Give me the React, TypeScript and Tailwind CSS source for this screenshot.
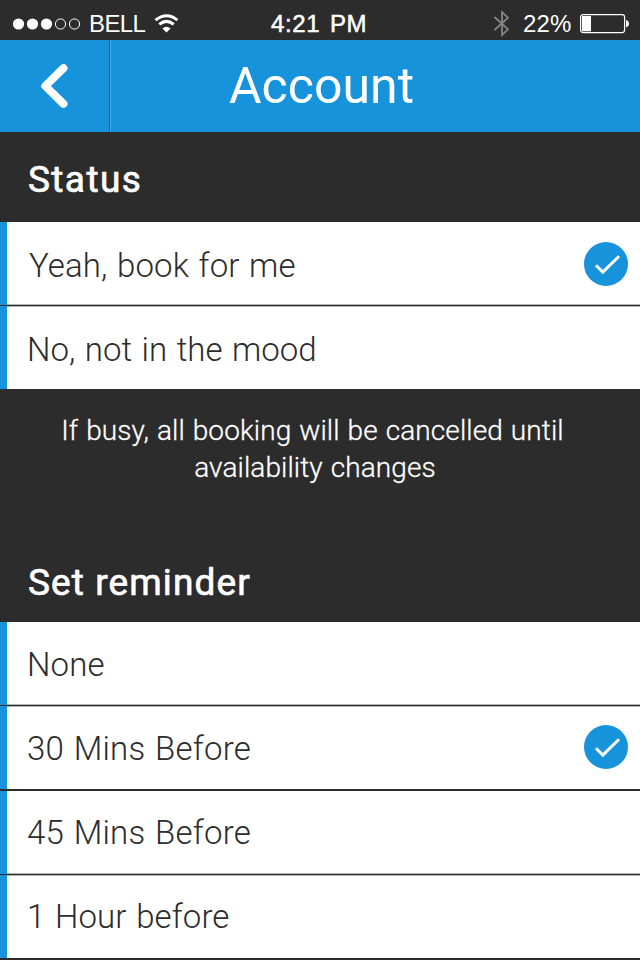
import React from "react";

function Check({ offset }: { offset: string }) {
  return (
    <svg className={`mr-3 h-11 w-11 shrink-0 ${offset}`} viewBox="0 0 44 44" fill="none">
      <circle cx="22" cy="22" r="22" fill="#1793dc" />
      <path d="M12 23.3 L18.8 30.1 L35 14.3" stroke="#fff" strokeWidth="3" />
    </svg>
  );
}

type Option = { label: string; check?: string; text: string };

function Row({ label, check, text }: Option) {
  return (
    <div className="flex h-[82px] items-center border-l-[7px] border-[#1793dc] bg-white">
      <span className={`flex-1 whitespace-nowrap text-[33px] leading-[38px] font-light [word-spacing:1.5px] ${text}`}>{label}</span>
      {check && <Check offset={check} />}
    </div>
  );
}

// Thin rule with soft grey edges that stop at the blue bar.
function Hairline() {
  return (
    <div className="flex h-[3px] bg-[#1793dc]">
      <div className="mt-px h-px w-[7px] bg-[#2c2c2c]" />
      <div className="h-[3px] flex-1 border-y border-[#b3b5b2] bg-[#2c2c2c]" />
    </div>
  );
}

function StatusBar() {
  return (
    <div className="flex h-10 items-center pt-[7px] font-['Liberation_Sans',Arial,sans-serif] text-[24px] leading-8">
      <svg className="ml-[12px] h-3 w-[70px]" viewBox="0 0 70 12">
        <g fill="#fff">
          <circle cx="6.5" cy="6" r="5.6" />
          <circle cx="20.5" cy="6" r="5.6" />
          <circle cx="34.5" cy="6" r="5.6" />
        </g>
        <g fill="none" stroke="#fff" strokeWidth="1">
          <circle cx="48.5" cy="6" r="5.1" />
          <circle cx="62.5" cy="6" r="5.1" />
        </g>
      </svg>
      <span className="ml-[7px] w-[65px] whitespace-nowrap tracking-[-0.6px]">BELL</span>
      <svg className="h-5 w-6" viewBox="0 0 24 20" fill="none" stroke="#fff" strokeWidth="3">
        <path d="M1.5 6.2 Q12.5 -2.7 23.5 6.2" />
        <path d="M5.3 10.4 Q12.5 4.4 19.7 10.4" />
        <path d="M12.5 18.5 L8.4 14.5 Q12.5 11 16.6 14.5 Z" fill="#fff" stroke="none" />
      </svg>
      <span className="ml-[93px] w-[222px] whitespace-nowrap tracking-[0.6px] [word-spacing:2.5px] [-webkit-text-stroke:0.5px_white]">4:21 PM</span>
      <svg className="h-[27px] w-4" viewBox="0 0 16 27" fill="none" stroke="#858585" strokeWidth="1.8">
        <path d="M1.5 7 L15 19.3 L9 25 V2 L15 7.7 L1.5 20" />
      </svg>
      <span className="ml-[14px] w-[57px] whitespace-nowrap tracking-[0.2px]">22%</span>
      <svg className="h-5 w-[50px]" viewBox="0 0 50 20">
        <rect x="0.6" y="0.6" width="44" height="18" rx="2.5" fill="none" stroke="#fff" strokeWidth="1.2" />
        <rect x="2" y="2" width="9" height="15.3" fill="#fff" />
        <path d="M46 6 Q49 7 49 9.7 Q49 12.3 46 13.3 Z" fill="#fff" />
      </svg>
    </div>
  );
}

export default function App() {
  return (
    <div className="h-[960px] w-[640px] overflow-hidden bg-[#2c2c2c] font-[Roboto,sans-serif] text-white">
      <StatusBar />
      <header className="flex h-[92px] bg-[#1793dc]">
        <div className="flex w-[109px] items-center justify-center">
          <svg className="h-12 w-8" viewBox="0 0 32 48" fill="none" stroke="#fff" strokeWidth="8" strokeLinejoin="round" strokeLinecap="round">
            <path d="M24.5 6.2 L6.3 24 L24.5 41.8" />
          </svg>
        </div>
        <div className="w-px bg-[#1569a8]" />
        <div className="w-px bg-[#48a8e6]" />
        <h1 className="ml-[118px] mt-[17px] whitespace-nowrap text-[50px] leading-[58px]">Account</h1>
      </header>
      <section>
        <h2 className="h-[90px] whitespace-nowrap pl-7 pt-[27px] text-[37px] leading-[42px] tracking-[1.4px] [-webkit-text-stroke:0.7px_white]">Status</h2>
        <div className="text-[#2c2c2c]">
          <Row label="Yeah, book for me" check="mt-[2px]" text="pl-[22px] pt-[5px] tracking-[0.1px]" />
          <Hairline />
          <Row label="No, not in the mood" text="pl-[20px] pt-[4px]" />
        </div>
        <p className="h-[157px] w-[625px] pt-[23px] text-center text-[28px] leading-[37px] font-light [-webkit-text-stroke:0.3px_white] [word-spacing:1px] tracking-[0.1px]">
          If busy, all booking will be cancelled until
          <span className="block pl-[5px]">availability changes</span>
        </p>
      </section>
      <section>
        <h2 className="h-[76px] whitespace-nowrap pl-7 pt-[16px] text-[37px] leading-[42px] tracking-[1.1px] [-webkit-text-stroke:0.7px_white]">Set reminder</h2>
        <div className="text-[#2c2c2c]">
          <Row label="None" text="pl-[20px] pt-[4px] tracking-[0.1px]" />
          <Hairline />
          <Row label="30 Mins Before" check="mb-[2px]" text="pl-[20px] pt-[2px] tracking-[0.2px]" />
          <div className="h-[2px] bg-[#2c2c2c]" />
          <Row label="45 Mins Before" text="pl-[20px] pt-[2px] tracking-[0.2px]" />
          <Hairline />
          <Row label="1 Hour before" text="pl-[20px] tracking-[0.1px]" />
          <div className="h-[2px] bg-[#2c2c2c]" />
        </div>
      </section>
    </div>
  );
}
